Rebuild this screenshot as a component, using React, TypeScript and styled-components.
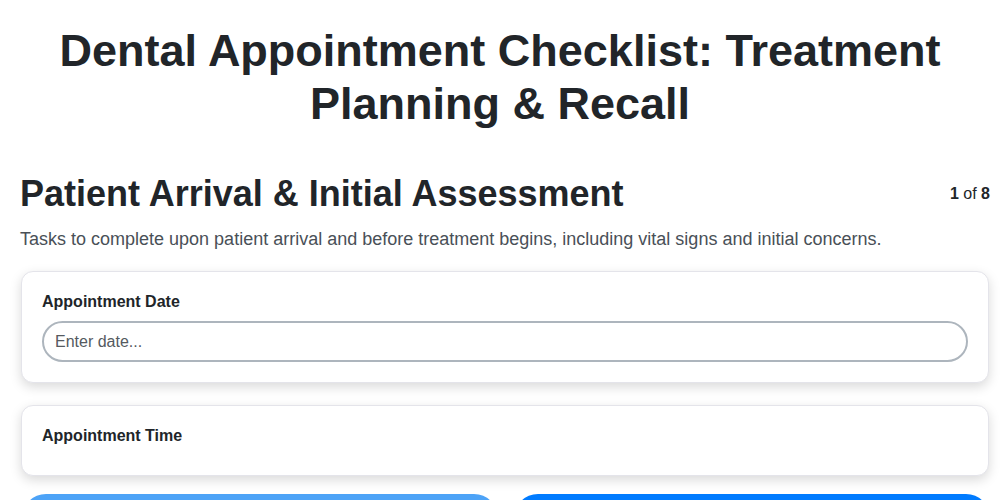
import React from 'react';
import styled, {createGlobalStyle} from 'styled-components';

const GlobalStyle = createGlobalStyle`
	* {
		box-sizing: border-box;
	}
	html, body {
		overflow: hidden;
	}
	body {
		margin: 0;
		background: #ffffff;
		font-family: "Liberation Sans", Arial, sans-serif;
		color: #212529;
	}
`;

const Page = styled.div`
	padding: 24px 10px 0 20px;
	display: flex;
	flex-direction: column;
`;

const Title = styled.h1`
	margin: 0 0 43px -10px;
	font-size: 45px;
	line-height: 53px;
	font-weight: 700;
	text-align: center;
	color: #212529;
`;

const HeaderRow = styled.div`
	display: flex;
	align-items: center;
	justify-content: space-between;
`;

const SectionTitle = styled.h2`
	margin: 0;
	font-size: 36px;
	line-height: 42px;
	font-weight: 700;
	color: #212529;
`;

const Counter = styled.span`
	font-size: 16px;
	color: #212529;

	b {
		font-weight: 700;
	}
`;

const Description = styled.p`
	margin: 12px 0 20px;
	font-size: 18px;
	line-height: 24px;
	color: #495057;
`;

const Card = styled.div`
	background: #ffffff;
	border: 1px solid #e4e4ea;
	border-radius: 12px;
	box-shadow: 0 4px 12px rgba(0, 0, 0, 0.15);
	padding: 20px;
	margin: 0 1px 22px;
	display: flex;
	flex-direction: column;
`;

const Label = styled.label`
	font-size: 16px;
	line-height: 19px;
	font-weight: 700;
	color: #212529;
	margin-bottom: 10px;
`;

const Input = styled.input`
	height: 41px;
	width: 100%;
	border: 2px solid #adb5bd;
	border-radius: 21px;
	padding: 0 11px;
	font-family: "Liberation Sans", Arial, sans-serif;
	font-size: 16px;
	color: #212529;
	background: #ffffff;
	outline: none;

	&::placeholder {
		color: #555a60;
	}
`;

const ButtonRow = styled.div`
	display: grid;
	grid-template-columns: 1fr 1fr;
	gap: 16px;
	margin: -4px 0 0 2px;
`;

const NavButton = styled.button<{ $primary?: boolean }>`
	height: 48px;
	border: none;
	border-radius: 24px;
	background: ${p => (p.$primary ? '#007bff' : '#4da3f7')};
	color: #ffffff;
	font-family: "Liberation Sans", Arial, sans-serif;
	font-size: 16px;
	font-weight: 700;
`;

export default function App() {
	return (
		<>
			<GlobalStyle/>
			<Page>
				<Title>Dental Appointment Checklist: Treatment Planning &amp; Recall</Title>
				<HeaderRow>
					<SectionTitle>Patient Arrival &amp; Initial Assessment</SectionTitle>
					<Counter><b>1</b> of <b>8</b></Counter>
				</HeaderRow>
				<Description>
					Tasks to complete upon patient arrival and before treatment begins, including vital signs and initial concerns.
				</Description>
				<Card>
					<Label htmlFor="appt-date">Appointment Date</Label>
					<Input id="appt-date" type="text" placeholder="Enter date..."/>
				</Card>
				<Card>
					<Label>Appointment Time</Label>
				</Card>
				<ButtonRow>
					<NavButton>Previous</NavButton>
					<NavButton $primary>Next</NavButton>
				</ButtonRow>
			</Page>
		</>
	);
}
